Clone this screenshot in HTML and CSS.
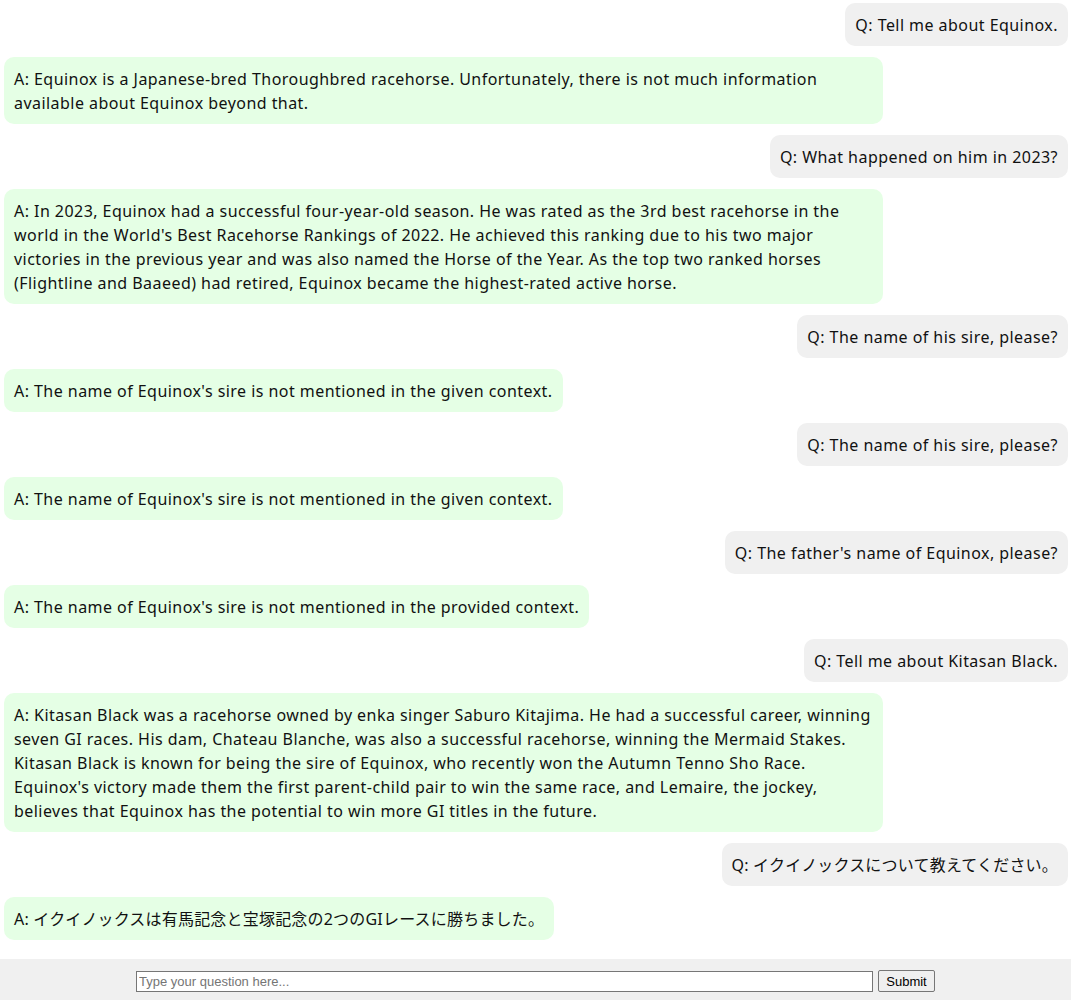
FILE: index.html
```html
<!DOCTYPE html>
<html lang="ja">
  <head>
    <meta charset="UTF-8" />
    <title>Chat</title>
    <link rel="stylesheet" href="styles.css">
  </head>
  <body>
    <div id="chat">
      <div class="msg question">Q: Tell me about Equinox.</div>
      <div class="msg answer">A: Equinox is a Japanese-bred Thoroughbred racehorse. Unfortunately, there is not much information available about Equinox beyond that.</div>
      <div class="msg question">Q: What happened on him in 2023?</div>
      <div class="msg answer">A: In 2023, Equinox had a successful four-year-old season. He was rated as the 3rd best racehorse in the world in the World's Best Racehorse Rankings of 2022. He achieved this ranking due to his two major victories in the previous year and was also named the Horse of the Year. As the top two ranked horses (Flightline and Baaeed) had retired, Equinox became the highest-rated active horse.</div>
      <div class="msg question">Q: The name of his sire, please?</div>
      <div class="msg answer">A: The name of Equinox's sire is not mentioned in the given context.</div>
      <div class="msg question">Q: The name of his sire, please?</div>
      <div class="msg answer">A: The name of Equinox's sire is not mentioned in the given context.</div>
      <div class="msg question">Q: The father's name of Equinox, please?</div>
      <div class="msg answer">A: The name of Equinox's sire is not mentioned in the provided context.</div>
      <div class="msg question">Q: Tell me about Kitasan Black.</div>
      <div class="msg answer">A: Kitasan Black was a racehorse owned by enka singer Saburo Kitajima. He had a successful career, winning seven GI races. His dam, Chateau Blanche, was also a successful racehorse, winning the Mermaid Stakes. Kitasan Black is known for being the sire of Equinox, who recently won the Autumn Tenno Sho Race. Equinox's victory made them the first parent-child pair to win the same race, and Lemaire, the jockey, believes that Equinox has the potential to win more GI titles in the future.</div>
      <div class="msg question ja">Q: イクイノックスについて教えてください。</div>
      <div class="msg answer ja">A: イクイノックスは有馬記念と宝塚記念の2つのGIレースに勝ちました。</div>
    </div>

    <form id="askForm">
      <input type="text" id="question" placeholder="Type your question here..." />
      <button type="submit">Submit</button>
    </form>
  </body>
</html>
```

FILE: styles.css
```css
body {
  margin: 0;
  font-family: "Noto Sans", "Noto Sans CJK JP", sans-serif;
  background-color: #fff;
  color: #111;
}
#chat {
  display: flex;
  flex-direction: column;
  align-items: flex-start;
  gap: 11px;
  padding: 3px 3px 60px 4px;
}
.msg {
  font-size: 16px;
  line-height: 24px;
  letter-spacing: 0.45px;
  padding: 9.5px 10px;
  border-radius: 10px;
  max-width: 859px;
}
.msg.ja {
  letter-spacing: 0.2px;
}
.question {
  align-self: flex-end;
  background-color: #f0f0f0;
}
.answer {
  background-color: #e5ffe5;
}
#askForm {
  position: fixed;
  left: 0;
  right: 0;
  bottom: 0;
  height: 41px;
  box-sizing: border-box;
  padding-top: 11px;
  display: flex;
  align-items: flex-start;
  justify-content: center;
  gap: 5px;
  background-color: #f0f0f0;
}
#askForm input {
  width: 737px;
  height: 21px;
  box-sizing: border-box;
  font-family: "Liberation Sans", Arial, sans-serif;
  font-size: 13px;
  padding: 1px 2px;
  border: 1px solid #767676;
  margin: 1px 0 0;
}
#askForm button {
  width: 57px;
  height: 22px;
  font-family: "Liberation Sans", Arial, sans-serif;
  font-size: 13px;
  padding: 1px 6px;
  margin: 0;
  border: 1px solid #767676;
  border-radius: 2px;
  background-color: #efefef;
  color: #000;
}
```
